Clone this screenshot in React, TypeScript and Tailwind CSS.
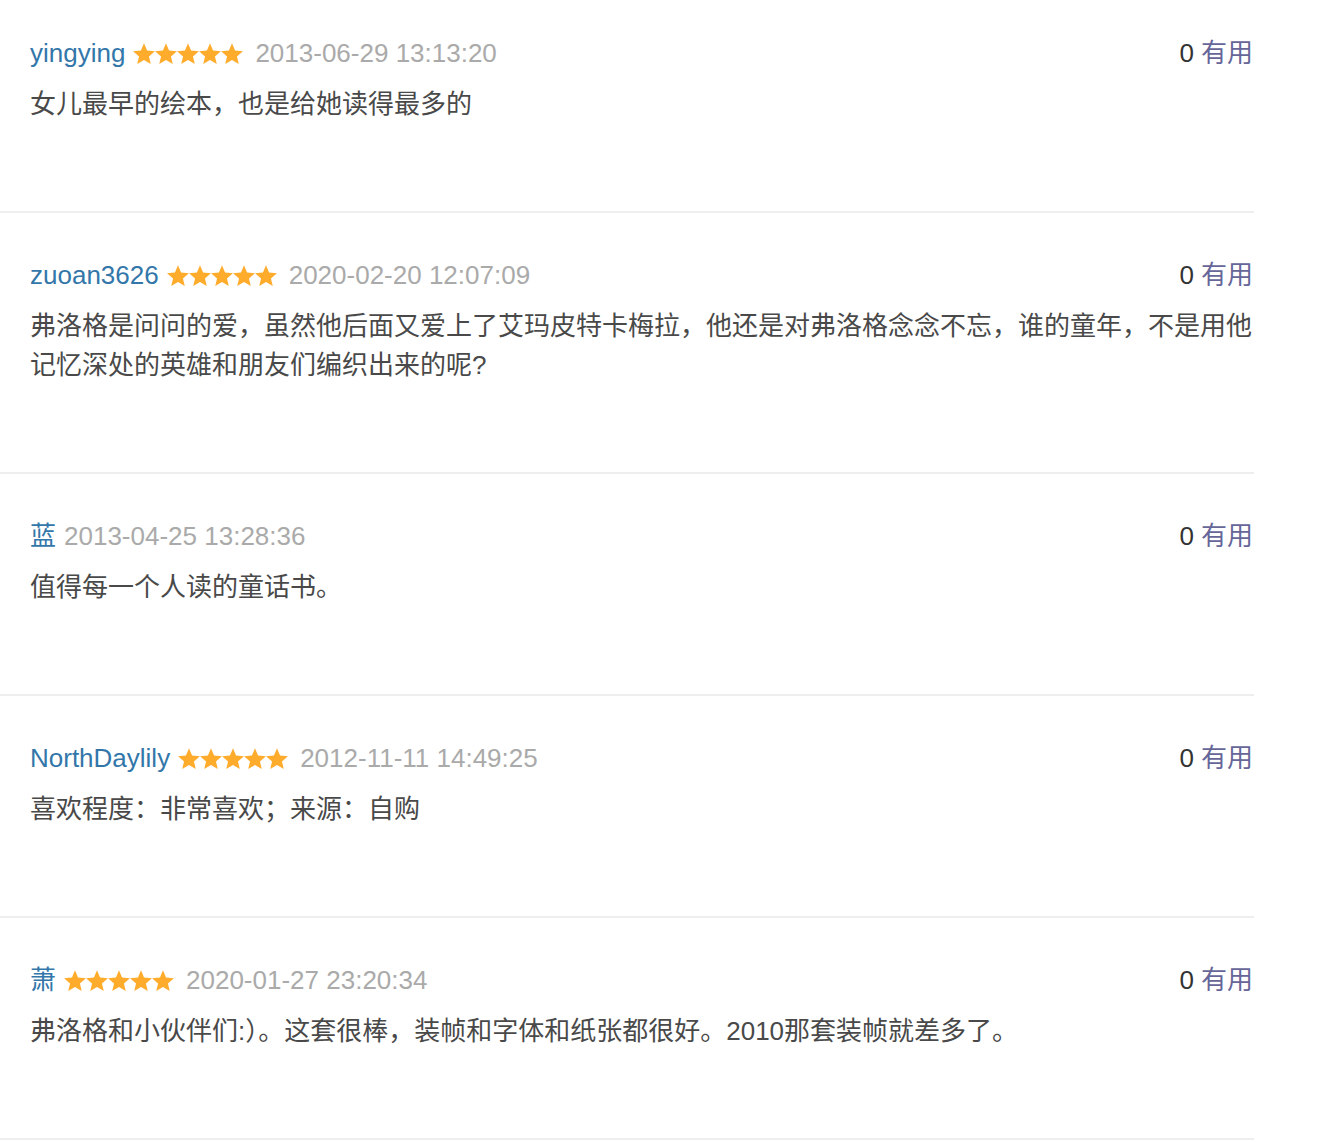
import React from "react";

type Comment = {
  user: string;
  stars: number;
  time: string;
  text: string;
  votes: number;
};

const COMMENTS: Comment[] = [
  { user: "yingying", stars: 5, time: "2013-06-29 13:13:20", text: "女儿最早的绘本，也是给她读得最多的", votes: 0 },
  {
    user: "zuoan3626",
    stars: 5,
    time: "2020-02-20 12:07:09",
    text: "弗洛格是问问的爱，虽然他后面又爱上了艾玛皮特卡梅拉，他还是对弗洛格念念不忘，谁的童年，不是用他记忆深处的英雄和朋友们编织出来的呢?",
    votes: 0,
  },
  { user: "蓝", stars: 0, time: "2013-04-25 13:28:36", text: "值得每一个人读的童话书。", votes: 0 },
  { user: "NorthDaylily", stars: 5, time: "2012-11-11 14:49:25", text: "喜欢程度：非常喜欢；来源：自购", votes: 0 },
  { user: "萧", stars: 5, time: "2020-01-27 23:20:34", text: "弗洛格和小伙伴们:）。这套很棒，装帧和字体和纸张都很好。2010那套装帧就差多了。", votes: 0 },
];

const FONT = { fontFamily: '"Liberation Sans", Arial, "Noto Sans CJK SC", sans-serif' };

function Star() {
  return (
    <svg width="22" height="22" viewBox="0 0 22 22" className="block">
      <path
        d="M11 0.3L14.06 7.59 21.94 8.25 15.95 13.41 17.76 21.1 11 17 4.24 21.1 6.05 13.41 0.06 8.25 7.94 7.59z"
        fill="#ffac2d"
      />
    </svg>
  );
}

function Stars({ n }: { n: number }) {
  return (
    <span className="ml-[8px] mr-[12px] flex items-center">
      {Array.from({ length: n }).map((_, i) => (
        <Star key={i} />
      ))}
    </span>
  );
}

export default function App() {
  return (
    <div className="min-h-screen bg-white" style={FONT}>
      <div className="w-[1254px] -mt-[9px]">
        {COMMENTS.map((c, idx) => (
          <div key={idx} className="border-b-2 border-[#eeeeee] pl-[30px] pt-[43px] pb-[87px]">
            <div className="flex items-center justify-between h-[39px] text-[26px]">
              <div className="flex items-center">
                <span className="text-[#3377aa]">{c.user}</span>
                {c.stars > 0 ? <Stars n={c.stars} /> : <span className="w-[8px]" />}
                <span className="text-[#aaaaaa]">{c.time}</span>
              </div>
              <div className="pr-[1px]">
                <span className="text-[#333333]">{c.votes}</span>
                <span className="ml-[7px] text-[#666699]">有用</span>
              </div>
            </div>
            <p className="mt-[12px] text-[26px] leading-[39px] text-[#494949]">{c.text}</p>
          </div>
        ))}
      </div>
    </div>
  );
}
